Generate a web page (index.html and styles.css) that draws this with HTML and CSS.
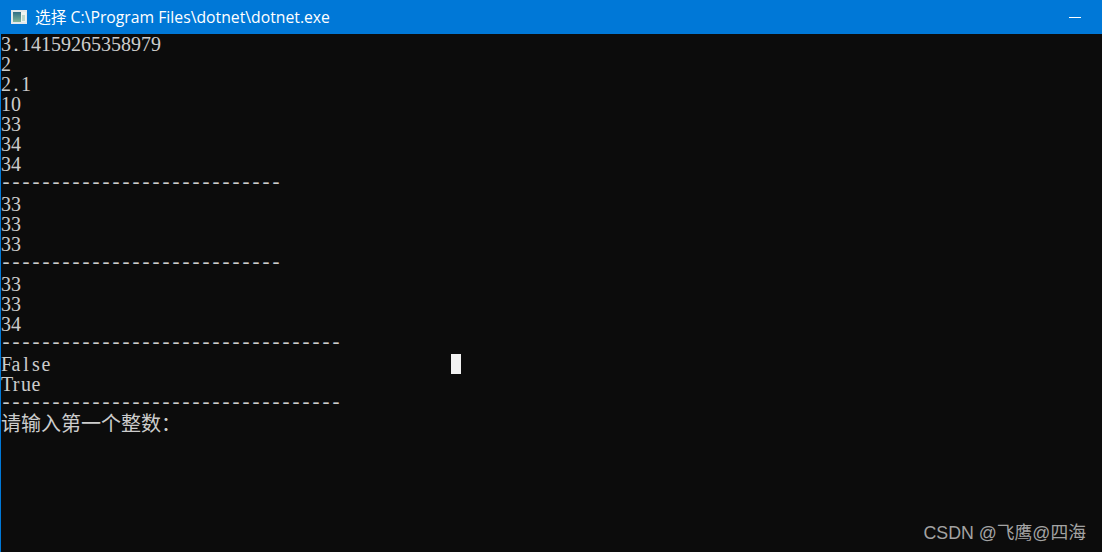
FILE: index.html
```html
<!DOCTYPE html>
<html lang="zh">
<head>
<meta charset="utf-8">
<title>dotnet.exe</title>
<link rel="stylesheet" href="styles.css">
</head>
<body>
<div class="window">
  <header class="titlebar">
    <svg class="app-icon" width="16" height="14" viewBox="0 0 16 14">
      <defs>
        <linearGradient id="pane" x1="0" y1="0" x2="0" y2="1">
          <stop offset="0" stop-color="#2f6f86"/>
          <stop offset="1" stop-color="#7fb59a"/>
        </linearGradient>
      </defs>
      <rect x="0" y="0" width="16" height="14" fill="#e3e8ea"/>
      <rect x="2" y="2" width="8" height="10" fill="url(#pane)"/>
      <rect x="10" y="2" width="5" height="10" fill="#eef3f0"/>
      <rect x="11" y="5" width="3" height="6" fill="#bcd8cc"/>
    </svg>
    <span class="title">选择 C:\Program Files\dotnet\dotnet.exe</span>
    <span class="minimize"></span>
  </header>
  <main class="console">
    <div class="line">3<span class="c">.</span>14159265358979</div>
    <div class="line">2</div>
    <div class="line">2<span class="c">.</span>1</div>
    <div class="line">10</div>
    <div class="line">33</div>
    <div class="line">34</div>
    <div class="line">34</div>
    <div class="line dash">----------------------------</div>
    <div class="line">33</div>
    <div class="line">33</div>
    <div class="line">33</div>
    <div class="line dash">----------------------------</div>
    <div class="line">33</div>
    <div class="line">33</div>
    <div class="line">34</div>
    <div class="line dash">----------------------------------</div>
    <div class="line"><span class="c">F</span><span class="c">a</span><span class="c">l</span><span class="c">s</span><span class="c">e</span></div>
    <div class="line"><span class="c">T</span><span class="c">r</span><span class="c">u</span><span class="c">e</span></div>
    <div class="line dash">----------------------------------</div>
    <div class="line">请输入第一个整数：</div>
    <span class="cursor"></span>
    <span class="watermark">CSDN @飞鹰@四海</span>
  </main>
</div>
</body>
</html>
```
FILE: styles.css
```css
* { box-sizing: border-box; }
html, body { margin: 0; height: 100%; }
body { background: #0c0c0c; overflow: hidden; }
.window { display: flex; flex-direction: column; width: 1102px; height: 552px; }
.titlebar {
  display: flex; align-items: center; flex: 0 0 34px;
  background: #0078d7; color: #fff; padding-left: 11px;
}
.app-icon { flex: none; margin-right: 8px; }
.title { font: 15.75px/20px "Open Sans", "Noto Sans CJK SC", sans-serif; }
.minimize { width: 12px; height: 1px; background: #fff; margin-left: auto; margin-right: 21px; }
.console {
  position: relative; flex: 1;
  border-left: 1px solid #0078d7; background: #0c0c0c; color: #cccccc;
  font: 20px/20px "Liberation Serif", "Noto Sans CJK SC", serif;
}
.line { height: 20px; white-space: pre; }
.c { display: inline-block; width: 10px; text-align: center; }
.dash { font-family: "Liberation Mono", monospace; letter-spacing: -2px; line-height: 19px; margin-left: -1px; }
.cursor { position: absolute; left: 450px; top: 320px; width: 10px; height: 20px; background: #f2f2f2; }
.watermark {
  position: absolute; right: 16px; bottom: 8px; color: #a3a3a3;
  font: 17.8px/22px "Liberation Sans", "Noto Sans CJK SC", sans-serif;
}
```
